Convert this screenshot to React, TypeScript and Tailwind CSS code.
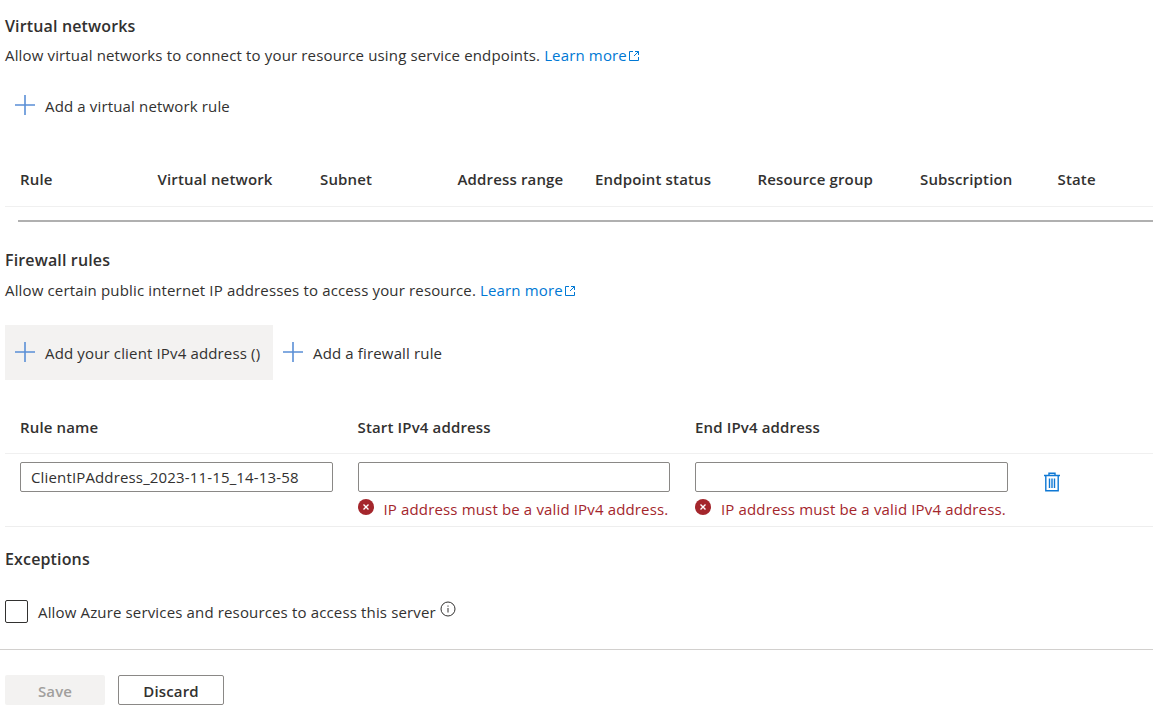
const FONT = "font-['Open_Sans','Noto_Sans',sans-serif]";

function ExternalIcon() {
  return (
    <svg viewBox="0 0 12 12" className="inline-block w-[12px] h-[12px] ml-[1px] align-[-1px]" fill="none" stroke="#0078d4" strokeWidth="1">
      <path d="M5 1.5H1.5v9h9V7" />
      <path d="M7 1.5h3.5V5M10.5 1.5 6 6" />
    </svg>
  );
}

function LearnMore() {
  return (
    <a className="text-[#0078d4]">
      Learn more
      <ExternalIcon />
    </a>
  );
}

function PlusIcon() {
  return (
    <svg viewBox="0 0 20 20" className="w-[20px] h-[20px] shrink-0 mb-[2px]" stroke="#5a8fd6" strokeWidth="1.6">
      <path d="M0 10h20M10 0v20" />
    </svg>
  );
}

function AddButton({ label, active, className }: { label: string; active?: boolean; className?: string }) {
  return (
    <div className={`flex items-center ${active ? 'bg-[#f3f2f1]' : ''} ${className ?? ''}`}>
      <PlusIcon />
      <span className="ml-[10px] text-[#323130] whitespace-nowrap">{label}</span>
    </div>
  );
}

function ErrorText() {
  return (
    <div className="flex items-center mt-[7px] h-[20px] text-[#a4262c] whitespace-nowrap">
      <svg viewBox="0 0 16 16" className="w-[16px] h-[16px] mr-[10px] mb-[4px] shrink-0">
        <circle cx="8" cy="8" r="8" fill="#a4262c" />
        <path d="M5.5 5.5l5 5M10.5 5.5l-5 5" stroke="#fff" strokeWidth="1.4" />
      </svg>
      IP address must be a valid IPv4 address.
    </div>
  );
}

export default function App() {
  const headers = ['Rule', 'Virtual network', 'Subnet', 'Address range', 'Endpoint status', 'Resource group', 'Subscription', 'State'];

  return (
    <div className={`${FONT} w-[1153px] h-[715px] overflow-hidden bg-white text-[15px] leading-[20px] tracking-[0.15px] text-[#323130]`}>
      {/* Virtual networks */}
      <div className="pl-[5px] pt-[15px]">
        <h2 className="text-[16px] leading-[22px] font-semibold">Virtual networks</h2>
        <p className="mt-[8px]">
          Allow virtual networks to connect to your resource using service endpoints. <LearnMore />
        </p>
        <AddButton label="Add a virtual network rule" className="mt-[29px] ml-[10px] h-[24px]" />
      </div>

      <div className="ml-[5px] mt-[51px] h-[38px] border-b border-[#f0f0f0] pl-[15px] grid grid-cols-[137.5px_162.5px_137.5px_137.5px_162.5px_162.5px_137.5px_1fr] font-semibold">
        {headers.map(h => (
          <div key={h}>{h}</div>
        ))}
      </div>
      <div className="ml-[18px] mt-[13px] h-[2px] bg-[#b0b0b0]" />

      {/* Firewall rules */}
      <div className="pl-[5px] pt-[27px]">
        <h2 className="text-[16px] leading-[22px] font-semibold">Firewall rules</h2>
        <p className="mt-[9px]">
          Allow certain public internet IP addresses to access your resource. <LearnMore />
        </p>
        <div className="flex mt-[25px] h-[55px]">
          <AddButton label="Add your client IPv4 address ()" active className="w-[268px] pl-[10px]" />
          <AddButton label="Add a firewall rule" className="ml-[10px]" />
        </div>
      </div>

      <div className="ml-[5px] mt-[37px] h-[37px] border-b border-[#f0f0f0] pl-[15px] grid grid-cols-[337.5px_337.5px_1fr] font-semibold">
        <div>Rule name</div>
        <div>Start IPv4 address</div>
        <div>End IPv4 address</div>
      </div>
      <div className="ml-[5px] h-[73px] border-b border-[#eeeeee] pl-[15px] pt-[8px] grid grid-cols-[337.5px_337.5px_1fr]">
        <div>
          <input
            readOnly
            value="ClientIPAddress_2023-11-15_14-13-58"
            className="w-[313px] h-[30px] px-[10px] border border-[#8a8886] rounded-[2px] outline-none"
          />
        </div>
        <div>
          <input readOnly className="block w-[312px] h-[30px] border border-[#8a8886] rounded-[2px] outline-none" />
          <ErrorText />
        </div>
        <div className="flex">
          <div>
            <input readOnly className="block w-[313px] h-[30px] border border-[#8a8886] rounded-[2px] outline-none" />
            <ErrorText />
          </div>
          <svg viewBox="0 0 18 20" className="w-[18px] h-[20px] ml-[35px] mt-[10px]" fill="none" stroke="#0f78d4" strokeWidth="1.4">
            <path d="M1 3.5h16M6 3.5V1.2h6v2.3M2.8 3.5v15.3h12.4V3.5" />
            <path d="M6.5 6.5v9.5M9 6.5v9.5M11.5 6.5v9.5" />
          </svg>
        </div>
      </div>

      {/* Exceptions */}
      <div className="pl-[5px] pt-[21px]">
        <h2 className="text-[16px] leading-[22px] font-semibold">Exceptions</h2>
        <div className="flex items-center mt-[30px]">
          <div className="w-[23px] h-[23px] border border-[#323130] rounded-[2px]" />
          <span className="ml-[10px]">Allow Azure services and resources to access this server</span>
          <svg viewBox="0 0 16 16" className="w-[16px] h-[16px] ml-[4px] mb-[6px]" fill="none" stroke="#323130" strokeWidth="1">
            <circle cx="8" cy="8" r="7" />
            <path d="M8 7v4.5M8 4.5v1.2" />
          </svg>
        </div>
      </div>

      <div className="mt-[26px] h-px bg-[#d2d0ce]" />

      <div className="flex pl-[5px] pt-[25px] gap-[13px] font-semibold">
        <button className="w-[100px] h-[30px] pt-[1px] bg-[#f3f2f1] text-[#a19f9d] rounded-[2px]">Save</button>
        <button className="w-[106px] h-[30px] pt-[1px] border border-[#8a8886] rounded-[2px] text-[#323130]">Discard</button>
      </div>
    </div>
  );
}
